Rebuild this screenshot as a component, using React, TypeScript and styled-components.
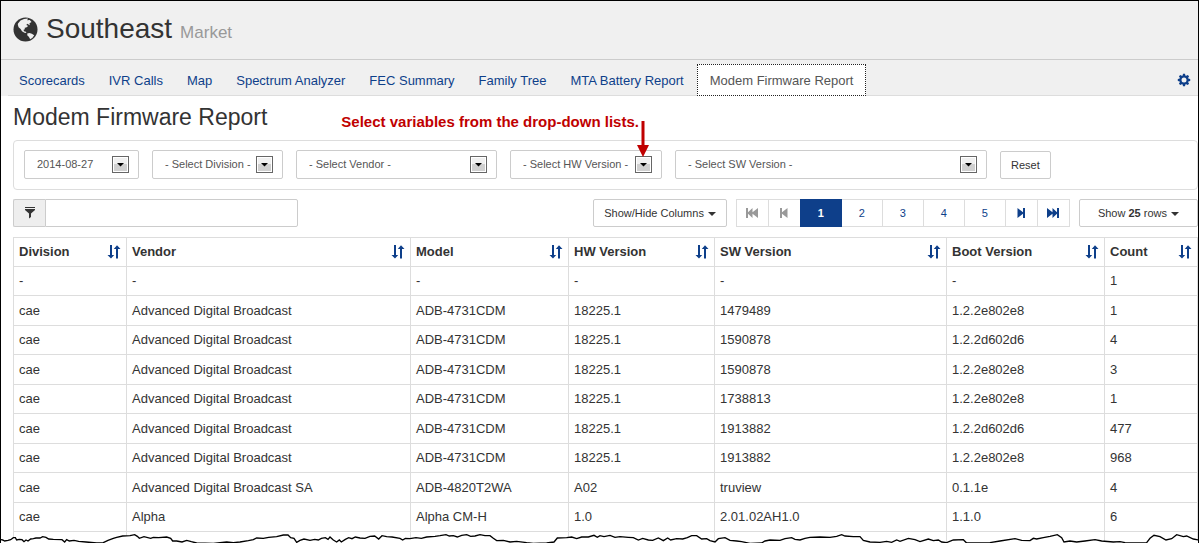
import React from 'react';
import styled, { createGlobalStyle, css } from 'styled-components';

const GlobalStyle = createGlobalStyle`
  *, *::before, *::after { box-sizing: border-box; }
  body {
    margin: 0;
    background: #fff;
    color: #333;
    font: 13px/18px "Liberation Sans", Arial, sans-serif;
  }
  button, input, select { font-family: inherit; color: inherit; }
`;

const navy = '#0e3f8a';

const Frame = styled.div`
  position: relative;
  border: 1px solid #000;
  border-bottom: 0;
  overflow: hidden;
`;

const Masthead = styled.header`
  background: #f0f0f0;
`;

const MarketTitle = styled.h1`
  display: flex;
  align-items: baseline;
  margin: 0;
  height: 59px;
  padding: 10px 12px 0;
  border-bottom: 1px solid #ccc;
  font-size: 28px;
  line-height: 36px;
  font-weight: 400;
  svg { flex: none; align-self: flex-start; margin: 6px 8px 0 0; }
  small { margin-left: 8px; font-size: 17px; color: #999; }
`;

const Nav = styled.nav`
  display: flex;
  align-items: flex-end;
  height: 36px;
  margin-left: 7px;
  border-bottom: 1px solid #ddd;
`;

const Tab = styled.a<{ $active?: boolean }>`
  display: block;
  height: 32px;
  margin-bottom: -1px;
  padding: 7px 10px 0;
  border: 1px solid transparent;
  color: ${navy};
  text-decoration: none;
  white-space: nowrap;
  & + & { margin-left: 2px; }
  ${p => p.$active && css`
    padding: 7px 12px 0;
    background: #fff;
    color: #555;
    border: 1px dotted #222;
  `}
`;

const GearButton = styled.button`
  margin: 0 7px 8px auto;
  padding: 0;
  border: 0;
  background: none;
  line-height: 0;
`;

const Content = styled.main`
  padding-left: 12px;
`;

const TitleRow = styled.div`
  display: flex;
  height: 44px;
  h2 {
    margin: 0;
    padding-top: 7px;
    font-size: 23px;
    line-height: 28px;
    font-weight: 400;
    white-space: nowrap;
  }
`;

const Note = styled.p`
  position: relative;
  z-index: 2;
  margin: 0 0 0 74px;
  padding-top: 17px;
  color: #c00000;
  font-size: 15px;
  font-weight: 700;
  white-space: nowrap;
  svg { position: absolute; left: 100%; top: 25px; margin-left: -2px; }
`;

const Filters = styled.form`
  display: flex;
  align-items: flex-end;
  gap: 13px;
  height: 50px;
  padding: 0 10px 10px;
  border: 1px solid #ddd;
  border-radius: 4px;
`;

const Picker = styled.label<{ $w: number }>`
  position: relative;
  flex: 0 1 ${p => p.$w}px;
  select {
    appearance: none;
    display: block;
    width: 100%;
    height: 29px;
    padding: 0 0 2px 12px;
    border: 1px solid #ccc;
    border-radius: 2px;
    background: #fff;
    color: #555;
    font-size: 11px;
  }
  svg { position: absolute; right: 10px; top: 6px; pointer-events: none; }
`;

const Button = styled.button<{ $wide?: boolean }>`
  height: 28px;
  padding: 0 ${p => (p.$wide ? 18 : 10)}px;
  border: 1px solid #ccc;
  border-radius: 2px;
  background: #fff;
  color: #333;
  font-size: 11px;
  white-space: nowrap;
`;

const Caret = styled.span`
  display: inline-block;
  margin-left: 4px;
  border: 4px solid transparent;
  border-top-color: #333;
  border-bottom: 0;
  vertical-align: middle;
`;

const Toolbar = styled.div`
  display: flex;
  align-items: flex-start;
  margin: 9px 0 10px;
`;

const Search = styled.label`
  display: flex;
  width: 285px;
  margin-right: auto;
  span {
    display: flex;
    justify-content: center;
    width: 32px;
    height: 28px;
    padding-top: 7px;
    border: 1px solid #ccc;
    border-right: 0;
    border-radius: 2px 0 0 2px;
    background: #eee;
  }
  input {
    flex: 1;
    min-width: 0;
    height: 28px;
    padding: 0 8px;
    border: 1px solid #ccc;
    border-radius: 0 2px 2px 0;
    font-size: 11px;
  }
`;

const Pager = styled.div`
  display: flex;
  margin: 0 9px;
`;

const PageButton = styled.button<{ $active?: boolean; $icon?: boolean }>`
  display: flex;
  align-items: center;
  justify-content: center;
  width: ${p => (p.$icon ? 33 : 42)}px;
  height: 28px;
  padding: 0;
  border: 1px solid #ddd;
  background: #fff;
  color: ${navy};
  font-size: 11px;
  & + & { margin-left: -1px; }
  &:disabled { color: #999; }
  ${p => p.$active && css`
    z-index: 1;
    background: ${navy};
    border-color: ${navy};
    color: #fff;
    font-weight: 700;
  `}
`;

const Table = styled.table`
  width: 100%;
  table-layout: fixed;
  border-collapse: collapse;
  th, td {
    height: 29px;
    padding: 0 5px;
    border: 1px solid #ddd;
    text-align: left;
    white-space: nowrap;
  }
  tbody tr:nth-child(even) td { height: 30px; }
  tbody tr:last-child td { height: 12px; }
`;

const Heading = styled.div`
  display: flex;
  align-items: center;
  justify-content: space-between;
  button { padding: 0; border: 0; background: none; line-height: 0; }
`;

const Tear = styled.svg`
  position: absolute;
  left: -1px;
  right: -1px;
  bottom: 0;
  width: calc(100% + 2px);
  height: 12px;
`;

const Globe = () => (
  <svg width="25" height="25" viewBox="0 0 25 25" aria-hidden="true">
    <circle cx="12.5" cy="12.5" r="12" fill="#333" />
    <path fill="#f0f0f0" d="M5 6.500 7.500 3.500 11 2l4-.5-.8 1.800 2.600-.3 1.700 2-2 1.200.3 2-2.600-1.500-.8 1.300 1.800 1-2 1.500-1.500.3.200 1.400-1.300.6.300 1.400 2 .6.500 1.300-2-.3-2.400-1.600-1.400-2.200-2-1.800-.8-2.400z" />
    <path fill="#f0f0f0" d="m14.200 16.600 2.300-.6 2.300.8 2.400 1.400-1.700 2.500-2.300 1.600-1.400-2.500-1.400-1.300z" />
  </svg>
);

const Gear = () => (
  <svg width="14" height="14" viewBox="-7 -7 14 14" aria-hidden="true">
    <g fill={navy}>
      {[0, 45, 90, 135].map(a => (
        <path key={a} transform={`rotate(${a})`} d="M-1.500-4-1-6.200H1L1.500-4V4L1 6.200H-1L-1.500 4z" />
      ))}
      <circle r="4.600" />
    </g>
    <circle r="2.500" fill="#f0f0f0" />
  </svg>
);

const Funnel = () => (
  <svg width="10" height="12" viewBox="0 0 10 12" fill="#333" aria-hidden="true">
    <path d="M0 0h10v1H0zM0 2h10v1L6 6.500V10L4 11.500v-5L0 3z" />
  </svg>
);

const DropArrow = () => (
  <svg width="17" height="17" viewBox="0 0 17 17" aria-hidden="true">
    <rect x=".5" y=".5" width="16" height="16" fill="#fff" stroke="#666" />
    <path fill="#f0f0f0" d="M2 2h13v6H2z" />
    <path fill="#d0d0d0" d="M2 8h13v7H2z" />
    <path d="M5 7h7L8.500 10.500z" />
  </svg>
);

const SortIcon = () => (
  <svg width="14" height="14" viewBox="0 0 14 14" fill={navy} aria-hidden="true">
    <path d="M3 0h2v10h2.200L4 13.500.5 10H3zM9 13.500h2V4h2.500L10 .3 6.800 4H9z" />
  </svg>
);

const StepIcon = ({ double, flip }: { double?: boolean; flip?: boolean }) => (
  <svg
    width={double ? 12 : 8}
    height="10"
    viewBox={double ? '0 0 12 10' : '0 0 8 10'}
    fill="currentColor"
    aria-hidden="true"
  >
    <g transform={flip ? `translate(${double ? 12 : 8} 0) scale(-1 1)` : undefined}>
      <path d={double ? 'M0 0h2v4.200L6.500 0v4.200L12 0v10L6.500 5.800V10L2 5.800V10H0z' : 'M0 0h2v4.200L7.500 0v10L2 5.800V10H0z'} />
    </g>
  </svg>
);

const tearLine =
  '0,295 8,297 14,300 24,298 32,296 40,290 46,290 50,297 58,295 66,296 72,302 78,297 84,300 92,294 100,293 108,291 120,291 128,287 138,289 146,294 160,295 186,296 194,303 200,296 208,300 222,298 236,301 258,303 290,306 310,305 324,298 340,292 350,289 368,285 390,284 404,281 412,286 418,292 432,287 452,292 460,289 476,290 500,288 512,292 518,300 530,300 546,303 560,298 574,302 590,306 640,307 660,305 680,303 700,305 720,303 745,299 760,296 770,291 790,292 806,289 830,287 850,282 864,282 872,290 882,292 890,304 900,298 912,294 930,298 944,295 955,297 964,292 976,290 984,295 990,288 1000,297 1010,303 1018,297 1024,303 1036,295 1046,290 1056,293 1066,288 1080,291 1095,292 1110,286 1124,285 1136,294 1146,284 1160,287 1176,288 ' +
  '1200,292 1208,297 1216,292 1230,293 1248,290 1264,292 1280,288 1305,286 1320,284 1338,281 1348,285 1360,284 1372,288 1385,283 1400,281 1412,286 1425,285 1440,281 1455,284 1470,284 1480,292 1490,299 1510,298 1530,303 1550,301 1580,305 1600,307 1640,306 1662,303 1672,291 1700,290 1715,288 1730,293 1745,288 1765,288 1782,283 1792,289 1800,284 1812,287 1830,283 1845,289 1860,287 1885,289 1900,290 1915,297 1928,292 1945,297 1958,298 1975,291 1990,299 2003,291 2012,297 2030,293 2048,294 2062,290 2075,284 2090,284 2105,294 2120,293 2130,299 2145,303 2155,293 2175,290 2190,298 2210,300 2225,302 2250,307 2285,306 2295,300 2310,297 2340,298 2355,293 2375,290 2385,295 ' +
  '2400,297 2415,292 2430,289 2460,288 2490,289 2510,286 2525,281 2535,285 2560,287 2580,287 2590,298 2610,303 2640,304 2660,301 2675,304 2690,297 2700,301 2725,292 2745,296 2760,302 2785,294 2800,299 2815,297 2825,303 2840,305 2860,297 2890,296 2900,306 2930,306 2970,305 3000,300 3045,293 3065,298 3090,299 3100,292 3110,294 3130,290 3150,286 3172,281 3185,290 3192,303 3210,300 3230,303 3255,300 3285,296 3305,300 3340,303 3360,302 3375,305 3400,306 3440,305 3450,292 3462,283 3480,287 3498,297 3515,293 3530,281 3550,287 3560,285 3580,294 3597,297';

const tabs = ['Scorecards', 'IVR Calls', 'Map', 'Spectrum Analyzer', 'FEC Summary', 'Family Tree', 'MTA Battery Report', 'Modem Firmware Report'];

const pickers = [
  { name: 'Date', text: '2014-08-27', width: 115 },
  { name: 'Division', text: '- Select Division -', width: 131 },
  { name: 'Vendor', text: '- Select Vendor -', width: 201 },
  { name: 'HW Version', text: '- Select HW Version -', width: 152 },
  { name: 'SW Version', text: '- Select SW Version -', width: 312 },
];

const columns = [
  { name: 'Division', width: 113 },
  { name: 'Vendor', width: 284 },
  { name: 'Model', width: 158 },
  { name: 'HW Version', width: 146 },
  { name: 'SW Version', width: 232 },
  { name: 'Boot Version', width: 158 },
  { name: 'Count', width: 93 },
];

const adb = 'Advanced Digital Broadcast';
const rows = [
  ['-', '-', '-', '-', '-', '-', '1'],
  ['cae', adb, 'ADB-4731CDM', '18225.1', '1479489', '1.2.2e802e8', '1'],
  ['cae', adb, 'ADB-4731CDM', '18225.1', '1590878', '1.2.2d602d6', '4'],
  ['cae', adb, 'ADB-4731CDM', '18225.1', '1590878', '1.2.2e802e8', '3'],
  ['cae', adb, 'ADB-4731CDM', '18225.1', '1738813', '1.2.2e802e8', '1'],
  ['cae', adb, 'ADB-4731CDM', '18225.1', '1913882', '1.2.2d602d6', '477'],
  ['cae', adb, 'ADB-4731CDM', '18225.1', '1913882', '1.2.2e802e8', '968'],
  ['cae', 'Advanced Digital Broadcast SA', 'ADB-4820T2WA', 'A02', 'truview', '0.1.1e', '4'],
  ['cae', 'Alpha', 'Alpha CM-H', '1.0', '2.01.02AH1.0', '1.1.0', '6'],
  ['', '', '', '', '', '', ''],
];

export default function App() {
  return (
    <Frame>
      <GlobalStyle />
      <Masthead>
        <MarketTitle><Globe />Southeast <small>Market</small></MarketTitle>
        <Nav>
          {tabs.map((t, i) => (
            <Tab key={t} href="#" $active={i === tabs.length - 1}>{t}</Tab>
          ))}
          <GearButton type="button" aria-label="Settings"><Gear /></GearButton>
        </Nav>
      </Masthead>
      <Content>
        <TitleRow>
          <h2>Modem Firmware Report</h2>
          <Note>
            Select variables from the drop-down lists.
            <svg width="12" height="36" viewBox="0 0 12 36" fill="#c00000" aria-hidden="true">
              <path d="M4.500 0h3v24H12L6 36 0 24h4.500z" />
            </svg>
          </Note>
        </TitleRow>
        <Filters>
          {pickers.map(p => (
            <Picker key={p.name} $w={p.width}>
              <select aria-label={p.name}><option>{p.text}</option></select>
              <DropArrow />
            </Picker>
          ))}
          <Button type="reset">Reset</Button>
        </Filters>
        <Toolbar>
          <Search>
            <span><Funnel /></span>
            <input type="text" aria-label="Filter rows" />
          </Search>
          <Button type="button">Show/Hide Columns<Caret /></Button>
          <Pager>
            <PageButton $icon disabled aria-label="First"><StepIcon double /></PageButton>
            <PageButton $icon disabled aria-label="Previous"><StepIcon /></PageButton>
            {[1, 2, 3, 4, 5].map(n => (
              <PageButton key={n} $active={n === 1}>{n}</PageButton>
            ))}
            <PageButton $icon aria-label="Next"><StepIcon flip /></PageButton>
            <PageButton $icon aria-label="Last"><StepIcon double flip /></PageButton>
          </Pager>
          <Button type="button" $wide>Show <b>25</b> rows<Caret /></Button>
        </Toolbar>
        <Table>
          <colgroup>
            {columns.map(c => <col key={c.name} width={c.width} />)}
          </colgroup>
          <thead>
            <tr>
              {columns.map(c => (
                <th key={c.name} scope="col">
                  <Heading>{c.name}<button type="button" aria-label={`Sort by ${c.name}`}><SortIcon /></button></Heading>
                </th>
              ))}
            </tr>
          </thead>
          <tbody>
            {rows.map((r, i) => (
              <tr key={i}>{r.map((v, j) => <td key={j}>{v}</td>)}</tr>
            ))}
          </tbody>
        </Table>
      </Content>
      <Tear viewBox="0 273 3597 36" preserveAspectRatio="none" aria-hidden="true">
        <polygon points={`${tearLine} 3597,309 0,309`} fill="#fff" />
        <polyline points={tearLine} fill="none" stroke="#000" strokeWidth="4" />
      </Tear>
    </Frame>
  );
}
